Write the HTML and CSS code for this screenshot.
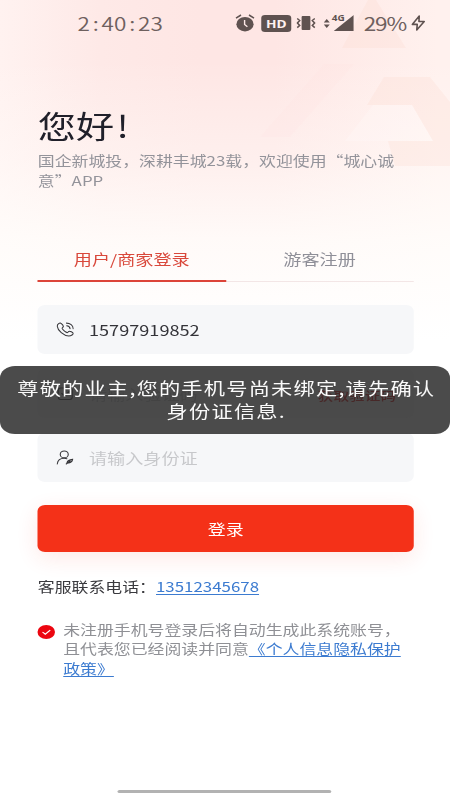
FILE: index.html
```html
<!DOCTYPE html>
<html lang="zh-CN">
<head>
<meta charset="utf-8">
<meta name="viewport" content="width=device-width">
<title>登录</title>
<link rel="stylesheet" href="styles.css">
</head>
<body>
<div class="screen">
  <svg class="backdrop" viewBox="0 0 450 300" preserveAspectRatio="none" aria-hidden="true">
    <path d="M368 0L342 48H406L376 0Z" fill="#fbdcd0" opacity=".3"/>
    <path d="M324 64H354L290 137H260Z" fill="#fcdcd8" opacity=".1"/>
    <path d="M384 77H430L450 102V166H395L388 141H433L412 105H367Z" fill="#fcdace" opacity=".26"/>
    <path d="M373 105H412L433 141H345Z" fill="#fff" opacity=".2"/>
  </svg>

  <header class="status">
    <div class="clock">2<i>:</i>40<i>:</i>23</div>
    <div class="indicators">
      <svg class="ic-alarm" viewBox="0 0 20 18" preserveAspectRatio="none"><ellipse cx="10" cy="10.2" rx="8.6" ry="7.2" fill="#5f5250"/><path d="M1 4.2L6 1M19 4.2L14 1" stroke="#5f5250" stroke-width="1.5"/><path d="M9.6 6V10.5L12.4 12.7" fill="none" stroke="#fde9e7" stroke-width="1.4"/></svg>
      <span class="hd">HD</span>
      <svg class="ic-vibrate" viewBox="0 0 20 16" preserveAspectRatio="none"><rect x="5.5" y="1" width="9" height="14" rx="1" fill="#5f5250"/><path d="M1 3.5L3.5 5.5L1.2 8L3.5 10.5L1 12.7M19 3.5L16.5 5.5L18.8 8L16.5 10.5L19 12.7" fill="none" stroke="#5f5250" stroke-width="1.6"/></svg>
      <svg class="ic-data" viewBox="0 0 6 9" preserveAspectRatio="none"><path d="M0 3.6L3 0L6 3.6ZM0 5.4L3 9L6 5.4Z" fill="#5f5250"/></svg>
      <span class="signal"><b>4G</b><svg viewBox="0 0 20 16" preserveAspectRatio="none"><path d="M0 16L20 0V16Z" fill="#5f5250"/></svg></span>
      <span class="battery">29%</span>
      <svg class="ic-bolt" viewBox="0 0 14 16" preserveAspectRatio="none"><path d="M8 1L1 9.4H6L5.5 15L13 6.5H7.7Z" fill="none" stroke="#5f5250" stroke-width="1.6" stroke-linejoin="round"/></svg>
    </div>
  </header>

  <main class="content">
    <h1>您好<span class="bang">!</span></h1>
    <p class="intro">国企新城投，深耕丰城23载，欢迎使用“城心诚意”APP</p>

    <nav class="tabs">
      <a class="tab active">用户/商家登录</a>
      <a class="tab">游客注册</a>
    </nav>

    <form class="fields">
      <div class="field">
        <svg class="field-icon" viewBox="0 0 18 15" preserveAspectRatio="none"><path d="M4.6 1.2C3.5 .4 1 2 1 4.2C1.5 8.6 7.3 13.8 12.6 14C15 14 17.2 12.2 17 11.3C16.6 10.4 13.8 9 13 9.2C12 9.4 11.8 10.8 10.9 10.6C9.3 10.2 6.4 7.9 5.9 6.4C5.7 5.6 7.2 5.2 7.1 4.4C7 3.6 5.4 1.7 4.6 1.2ZM10.5 3.8C12.2 3.9 13.6 5 13.8 6.6M10.2 1.1C13.9 1.1 16.8 3.5 17 6.6"/></svg>
        <span class="value">15797919852</span>
      </div>
      <div class="field">
        <svg class="field-icon" viewBox="0 0 18 15" preserveAspectRatio="none"><rect x="2" y="2" width="14" height="11.5" rx="2.5"/><path d="M5.5 7.5L8.5 10L13 5.5"/></svg>
        <span class="hint">请输入验证码</span>
        <span class="code">获取验证码</span>
      </div>
      <div class="field">
        <svg class="field-icon" viewBox="0 0 18 15" preserveAspectRatio="none"><ellipse cx="8" cy="4.4" rx="4" ry="3.4"/><path d="M1 14C1.4 10.5 4.2 8.2 8 8.2C9 8.2 9.8 8.4 10.6 8.8M10.8 12.6C11.2 10.6 13 9.8 16.4 9.4C16 11.8 13.6 13.6 10.8 12.6ZM10 14L14 11"/></svg>
        <span class="hint">请输入身份证</span>
      </div>
    </form>

    <div class="submit">登录</div>

    <p class="contact">客服联系电话：<a class="link">13512345678</a></p>

    <div class="agreement">
      <span class="check"><svg viewBox="0 0 14 14"><path d="M4 7L6.2 9.2L10.2 5.2" fill="none" stroke="#fff" stroke-width="1"/></svg></span>
      <p>未注册手机号登录后将自动生成此系统账号，且代表您已经阅读并同意<a class="link">《个人信息隐私保护政策》</a></p>
    </div>
  </main>

  <div class="home-bar"></div>
  <div class="toast">尊敬的业主,您的手机号尚未绑定,请先确认身份证信息.</div>
</div>
</body>
</html>
```
FILE: styles.css
```css
* { box-sizing: border-box; }
html, body { margin: 0; width: 450px; height: 800px; overflow: hidden; }
body { background: #fff; font-family: "Noto Sans CJK SC", "Noto Sans", sans-serif; }

/* The 360px layout is stretched horizontally to fill the window. */
.screen {
  position: relative;
  width: 360px;
  height: 800px;
  transform: scaleX(1.25);
  transform-origin: 0 0;
  display: flex;
  flex-direction: column;
  background:
    linear-gradient(180deg, rgba(255,255,255,0) 60px, rgba(255,253,251,.4) 160px, rgba(255,253,251,.88) 240px, #fff 340px),
    linear-gradient(90deg, #fff2f0 0, #fee9e7 80px, #fee6e4 160px, #fee6e4 220px, #fff1ee 350px);
}
.backdrop { position: absolute; left: 0; top: 0; width: 360px; height: 300px; }

.status {
  position: relative;
  height: 48px;
  padding: 0 19.7px 2px 62px;
  display: flex;
  align-items: center;
  justify-content: space-between;
  color: #6e605e;
}
.clock { font-size: 18px; font-weight: 350; display: flex; line-height: 24px; }
.clock i { font-style: normal; width: 9.4px; text-align: center; }
.indicators { display: flex; align-items: center; }
.indicators svg { display: block; }
.ic-alarm { width: 16px; height: 18px; margin-right: 5.6px; }
.hd {
  width: 23.4px; height: 17px; border-radius: 3px; margin-right: 4.8px;
  background: #5f5250; color: #fff2f0; font: 700 11px/17px "Noto Sans", sans-serif; text-align: center;
}
.ic-vibrate { width: 15.6px; height: 16px; margin-right: 6.4px; }
.ic-data { width: 4.8px; height: 9px; margin-right: 2.6px; }
.signal { position: relative; width: 16px; height: 16px; margin-right: 8.1px; }
.signal svg { width: 16px; height: 16px; }
.signal b { position: absolute; left: -1.5px; top: -2px; font: 700 8px/9px "Noto Sans", sans-serif; color: #5f5250; }
.battery { width: 33px; margin-right: 5.2px; font-size: 18px; letter-spacing: -.9px; line-height: 24px; }
.ic-bolt { width: 11.2px; height: 16px; }

.content { position: relative; padding: 55px 29.2px 0 30.3px; }
h1 { margin: 0; font-size: 30.5px; line-height: 44px; font-weight: 400; color: #20202a; }
.bang { margin-left: 2px; }
.intro { margin: 4px 0 0; font-size: 13.5px; line-height: 19.6px; color: #93939a; }

.tabs { display: flex; margin-top: 45px; border-bottom: 1px solid #f3e6e6; }
.tab {
  flex: 1; height: 47px; margin-bottom: -1px; text-align: center;
  font-size: 14.5px; line-height: 47px; color: #8f8f98;
}
.tab.active { color: #d9483b; border-bottom: 2px solid #dc4439; }

.fields { display: grid; gap: 15px; margin-top: 23px; }
.field {
  height: 49px; padding: 0 14px 0 14.6px; border-radius: 6px; background: #f6f7f9;
  display: flex; align-items: center; font-size: 14.5px; color: #333338;
}
.field-icon { width: 14.4px; height: 15px; margin-right: 11.9px; fill: none; stroke: #38383c; stroke-width: 1.1; stroke-linecap: round; }
.hint { color: #c7c8cb; }
.code { margin-left: auto; color: #e01818; font-size: 12.5px; font-weight: 500; padding-top: 3px; }

.submit {
  height: 47px; margin-top: 23px; border-radius: 6px; background: #f43118; color: #fff;
  font-size: 14.4px; line-height: 48px; text-align: center;
  box-shadow: 0 6px 20px rgba(244,49,24,.11);
}
.contact { margin: 24px 0 0; font-size: 13.5px; line-height: 20px; color: #3a3a3e; }
.link { color: #3c7bd0; text-decoration: underline; text-underline-offset: 2px; text-decoration-thickness: 1px; }
.agreement { display: flex; margin-top: 23.6px; }
.agreement p { flex: none; width: 274px; margin: 0; font-size: 13.5px; line-height: 19.6px; color: #8f9095; }
.check { width: 14px; height: 14px; margin: 5px 6.3px 0 0; border-radius: 50%; background: #ec0610; }
.check svg { display: block; }

.home-bar { position: absolute; left: 94px; bottom: 7px; width: 171px; height: 3px; border-radius: 2px; background: #b2b2b2; }
.toast {
  position: absolute; left: 0; top: 366px; width: 360px; height: 68px; padding: 10px 11px 10px 13px;
  border-radius: 12px; background: rgba(43,43,43,.85); color: #fafafa;
  font-size: 17px; letter-spacing: .95px; line-height: 23px; text-align: center;
}
```
